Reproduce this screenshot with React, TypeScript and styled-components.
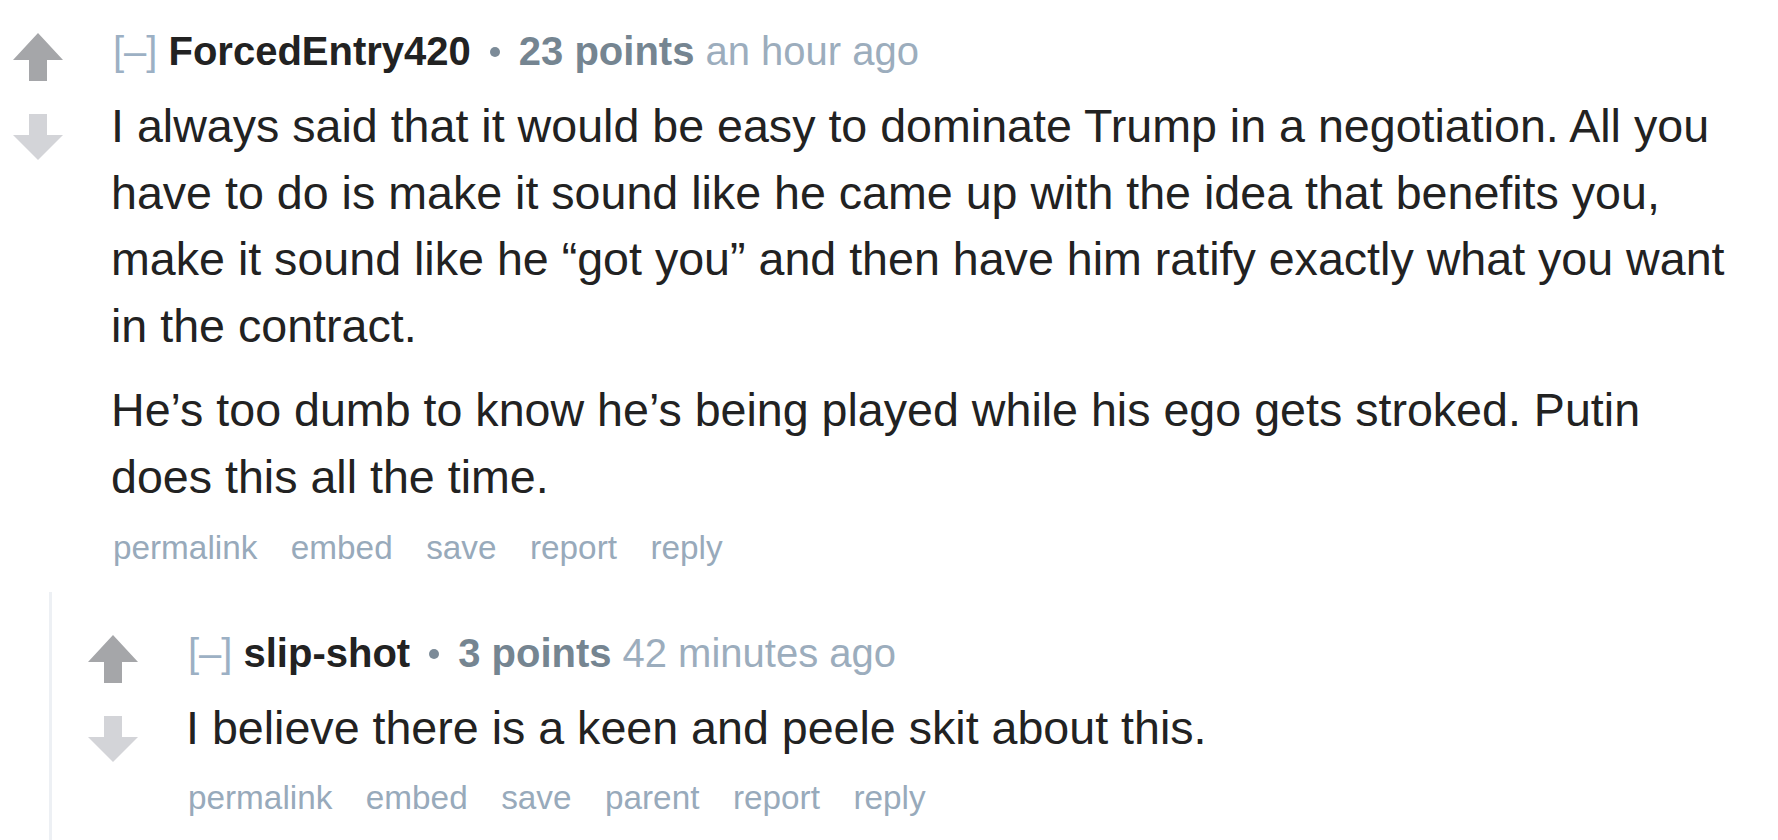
import React from "react";
import styled, { createGlobalStyle } from "styled-components";

const GlobalStyle = createGlobalStyle`
  html, body {
    margin: 0;
    padding: 0;
    background: #ffffff;
  }
  body {
    font-family: "Liberation Sans", Arial, Helvetica, sans-serif;
    color: #222222;
  }
`;

const Page = styled.div`
  padding: 27px 40px 0 13px;
  min-height: 813px;
`;

const CommentRow = styled.div`
  display: flex;
  align-items: flex-start;
`;

const VoteColumn = styled.div`
  flex: none;
  width: 51px;
  padding-top: 6px;
  display: flex;
  flex-direction: column;
  align-items: flex-start;
  gap: 33px;
`;

const Arrow = styled.svg<{ $tone: "up" | "down" }>`
  display: block;
  width: 50px;
  fill: ${(p) => (p.$tone === "up" ? "#a5a6a9" : "#d3d4d8")};
`;

const Content = styled.div`
  flex: 1;
  min-width: 0;
  margin-left: 47px;
`;

const Tagline = styled.div`
  font-size: 40px;
  line-height: 48px;
  white-space: nowrap;
  padding-left: 2px;
`;

const Collapse = styled.span`
  color: #9cb0c4;
  margin-right: 11px;
`;

const Author = styled.span`
  font-weight: 700;
  color: #222222;
`;

const Dot = styled.span`
  display: inline-block;
  width: 10px;
  height: 10px;
  border-radius: 50%;
  background: #7c8b98;
  margin: 0 19px 0 19px;
  vertical-align: 8px;
`;

const Score = styled.span`
  font-weight: 700;
  color: #758591;
  margin-right: 11px;
`;

const Time = styled.span`
  color: #9cadbd;
`;

const Body = styled.div`
  margin-top: 18px;
  font-size: 46.6px;
  line-height: 66.6px;
  color: #222222;
`;

const Paragraph = styled.p`
  margin: 0;
  & + & {
    margin-top: 18px;
  }
`;

const Actions = styled.ul`
  list-style: none;
  margin: 17px 0 0;
  padding: 0 0 0 2px;
  display: flex;
  gap: 33.5px;
  font-size: 33.3px;
  line-height: 40px;
`;

const Action = styled.li`
  color: #98aabb;
`;

const ChildThread = styled.div`
  margin-top: 24px;
  margin-left: 36px;
  border-left: 3px solid #edf0f4;
  padding: 37px 0 100px 36px;
`;

const UpArrow = () => (
  <Arrow $tone="up" viewBox="0 0 50 48" height={48}>
    <polygon points="25,0 50,27 34,27 34,48 16,48 16,27 0,27" />
  </Arrow>
);

const DownArrow = () => (
  <Arrow $tone="down" viewBox="0 0 50 46" height={46}>
    <polygon points="16,0 34,0 34,21 50,21 25,46 0,21 16,21" />
  </Arrow>
);

type CommentProps = {
  author: string;
  score: string;
  time: string;
  paragraphs: string[];
  actions: string[];
};

const Comment = ({ author, score, time, paragraphs, actions }: CommentProps) => (
  <CommentRow>
    <VoteColumn>
      <UpArrow />
      <DownArrow />
    </VoteColumn>
    <Content>
      <Tagline>
        <Collapse>[–]</Collapse>
        <Author>{author}</Author>
        <Dot />
        <Score>{score}</Score>
        <Time>{time}</Time>
      </Tagline>
      <Body>
        {paragraphs.map((t, i) => (
          <Paragraph key={i}>{t}</Paragraph>
        ))}
      </Body>
      <Actions>
        {actions.map((a) => (
          <Action key={a}>{a}</Action>
        ))}
      </Actions>
    </Content>
  </CommentRow>
);

export default function App() {
  return (
    <>
      <GlobalStyle />
      <Page>
        <Comment
          author="ForcedEntry420"
          score="23 points"
          time="an hour ago"
          paragraphs={[
            "I always said that it would be easy to dominate Trump in a negotiation. All you have to do is make it sound like he came up with the idea that benefits you, make it sound like he \u201cgot you\u201d and then have him ratify exactly what you want in the contract.",
            "He\u2019s too dumb to know he\u2019s being played while his ego gets stroked. Putin does this all the time.",
          ]}
          actions={["permalink", "embed", "save", "report", "reply"]}
        />
        <ChildThread>
          <Comment
            author="slip-shot"
            score="3 points"
            time="42 minutes ago"
            paragraphs={["I believe there is a keen and peele skit about this."]}
            actions={["permalink", "embed", "save", "parent", "report", "reply"]}
          />
        </ChildThread>
      </Page>
    </>
  );
}
